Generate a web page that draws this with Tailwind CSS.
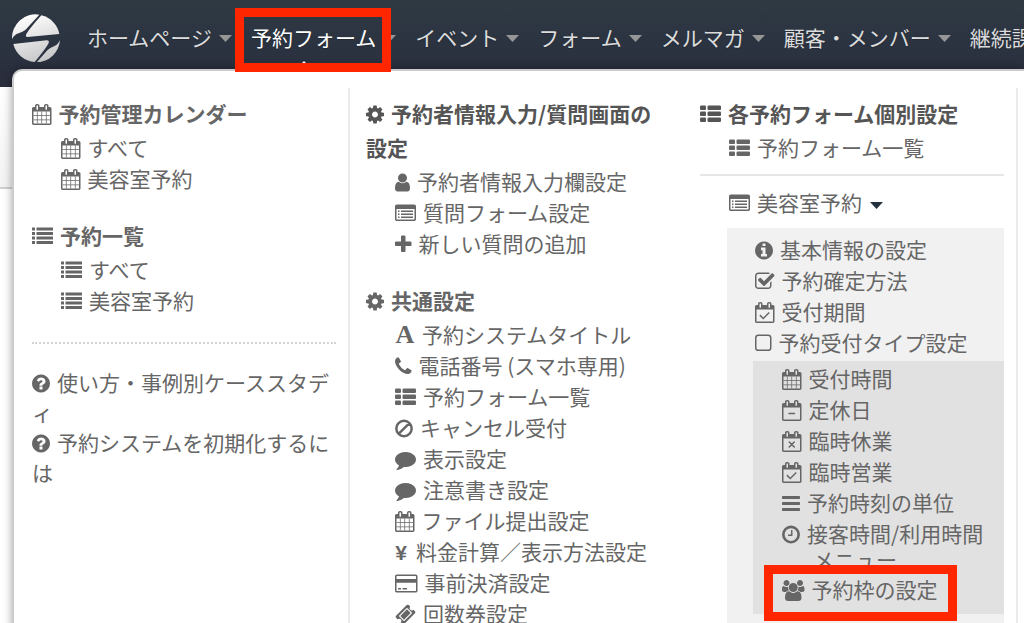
<!DOCTYPE html>
<html lang="ja">
<head>
  <meta charset="utf-8">
  <meta name="viewport" content="width=device-width, initial-scale=1">
  <title>予約フォーム</title>
  <script src="https://cdn.jsdelivr.net/npm/@tailwindcss/browser@4"></script>
</head>
<body class="h-screen overflow-hidden bg-white font-['Noto_Sans_CJK_JP',sans-serif] text-[21px] text-[#666]">

<!-- icon sprite -->
<svg class="hidden" aria-hidden="true">
  <defs>
    <path id="cal-frame" fill-rule="evenodd" d="M192 1664h1408v-1024h-1408zM576 448v-288q0-13-9.500-22.500t-22.500-9.500h-64q-13 0-22.500 9.500t-9.500 22.500v288q0 13 9.500 22.500t22.500 9.500h64q13 0 22.500-9.500t9.500-22.500zM1344 448v-288q0-13-9.500-22.500t-22.500-9.500h-64q-13 0-22.500 9.500t-9.500 22.500v288q0 13 9.500 22.500t22.500 9.500h64q13 0 22.500-9.500t9.500-22.500zM1728 384v1280q0 52-38 90t-90 38h-1408q-52 0-90-38t-38-90v-1280q0-52 38-90t90-38h128v-96q0-66 47-113t113-47h64q66 0 113 47t47 113v96h384v-96q0-66 47-113t113-47h64q66 0 113 47t47 113v96h128q52 0 90 38t38 90z"/>
    <g id="calendar">
      <use href="#cal-frame"/>
      <path d="M480 640h64v1024h-64zM864 640h64v1024h-64zM1248 640h64v1024h-64zM192 928h1408v64h-1408zM192 1312h1408v64h-1408z"/>
    </g>
    <g id="calendar-check">
      <use href="#cal-frame"/>
      <path d="M1303 964l-512 512q-10 9-23 9t-23-9l-288-288q-9-10-9-23t9-22l46-46q9-9 22-9t23 9l220 220 444-444q10-9 23-9t22 9l46 46q9 9 9 22t-9 23z"/>
    </g>
    <g id="calendar-minus">
      <use href="#cal-frame"/>
      <rect x="608" y="1088" width="576" height="128" rx="32"/>
    </g>
    <g id="calendar-times">
      <use href="#cal-frame"/>
      <path d="M680 936l432 432M1112 936l-432 432" fill="none" stroke="currentColor" stroke-width="128" stroke-linecap="round"/>
    </g>
    <path id="list" d="M0 128h256v256h-256zM0 512h256v256h-256zM0 896h256v256h-256zM0 1280h256v256h-256zM384 128h1408v256h-1408zM384 512h1408v256h-1408zM384 896h1408v256h-1408zM384 1280h1408v256h-1408z"/>
    <g id="th-list">
      <rect y="128" width="512" height="384" rx="96"/><rect x="640" y="128" width="1152" height="384" rx="96"/>
      <rect y="640" width="512" height="384" rx="96"/><rect x="640" y="640" width="1152" height="384" rx="96"/>
      <rect y="1152" width="512" height="384" rx="96"/><rect x="640" y="1152" width="1152" height="384" rx="96"/>
    </g>
    <g id="list-alt">
      <path fill-rule="evenodd" d="M160 128h1472q66 0 113 47t47 113v1088q0 66-47 113t-113 47h-1472q-66 0-113-47t-47-113v-1088q0-66 47-113t113-47zM128 512v864q0 32 32 32h1472q32 0 32-32v-864z"/>
      <path d="M256 640h128v128h-128zM256 896h128v128h-128zM256 1152h128v128h-128zM512 640h1024v128h-1024zM512 896h1024v128h-1024zM512 1152h1024v128h-1024z"/>
    </g>
    <path id="cog" fill-rule="evenodd" d="M1152 896q0-106-75-181t-181-75-181 75-75 181 75 181 181 75 181-75 75-181zm512-109v222q0 12-8 23t-20 13l-185 28q-19 54-39 91 35 50 107 138 10 12 10 25t-9 23q-27 37-99 108t-94 71q-12 0-26-9l-138-108q-44 23-91 38-16 136-29 186-7 28-36 28h-222q-14 0-24.500-8.500t-11.500-21.500l-28-184q-49-16-90-37l-141 107q-10 9-25 9-14 0-25-11-126-114-165-168-7-10-7-23 0-12 8-23 15-21 51-66.500t54-70.500q-27-50-41-99l-183-27q-13-2-21-12.500t-8-23.500v-222q0-12 8-23t19-13l186-28q14-46 39-92-40-57-107-138-10-12-10-24 0-10 9-23 26-36 98.500-107.500t94.500-71.500q13 0 26 10l138 107q44-23 91-38 16-136 29-186 7-28 36-28h222q14 0 24.500 8.500t11.500 21.500l28 184q49 16 90 37l142-107q9-9 24-9 13 0 25 10 129 119 165 170 7 8 7 22 0 12-8 23-15 21-51 66.500t-54 70.500q26 50 41 98l183 28q13 2 21 12.500t8 23.500z"/>
    <path id="user" d="M1536 1399q0 109-62.500 187t-150.500 78h-854q-88 0-150.500-78t-62.500-187q0-85 8.500-160.500t31.500-152 58.500-131 94-89 134.500-34.500q131 128 313 128t313-128q76 0 134.500 34.500t94 89 58.500 131 31.500 152 8.500 160.500zm-256-887q0 159-112.500 271.500t-271.500 112.500-271.500-112.500-112.500-271.500 112.500-271.500 271.500-112.500 271.500 112.500 112.500 271.500z"/>
    <path id="plus" d="M1600 736v192q0 40-28 68t-68 28h-416v416q0 40-28 68t-68 28h-192q-40 0-68-28t-28-68v-416h-416q-40 0-68-28t-28-68v-192q0-40 28-68t68-28h416v-416q0-40 28-68t68-28h192q40 0 68 28t28 68v416h416q40 0 68 28t28 68z"/>
    <path id="question" fill-rule="evenodd" d="M1024 1376v-192q0-14-9-23t-23-9h-192q-14 0-23 9t-9 23v192q0 14 9 23t23 9h192q14 0 23-9t9-23zm256-672q0-88-55.500-163t-138.500-116-170-41q-243 0-371 213-15 24 8 42l132 100q7 6 19 6 16 0 25-12 53-68 86-92 34-24 86-24 48 0 85.500 26t37.500 59q0 38-20 61t-68 45q-63 28-115.500 86.500t-52.500 125.500v36q0 14 9 23t23 9h192q14 0 23-9t9-23q0-19 21.500-49.500t54.500-49.500q32-18 49-28.500t46-35 44.500-48 28-60.500 12.500-81zm384 192q0 209-103 385.500t-279.500 279.500-385.500 103-385.500-103-279.500-279.500-103-385.500 103-385.500 279.500-279.500 385.500-103 385.500 103 279.500 279.500 103 385.500z"/>
    <path id="info" fill-rule="evenodd" d="M1152 1376v-160q0-14-9-23t-23-9h-96v-512q0-14-9-23t-23-9h-320q-14 0-23 9t-9 23v160q0 14 9 23t23 9h96v320h-96q-14 0-23 9t-9 23v160q0 14 9 23t23 9h448q14 0 23-9t9-23zm-128-896v-160q0-14-9-23t-23-9h-192q-14 0-23 9t-9 23v160q0 14 9 23t23 9h192q14 0 23-9t9-23zm640 416q0 209-103 385.500t-279.500 279.500-385.500 103-385.500-103-279.500-279.500-103-385.500 103-385.500 279.500-279.500 385.500-103 385.500 103 279.500 279.500 103 385.500z"/>
    <path id="check-square" d="M1472 930v318q0 119-84.500 203.500t-203.500 84.500h-832q-119 0-203.500-84.500t-84.500-203.500v-832q0-119 84.500-203.500t203.500-84.500h832q63 0 117 25 15 7 18 23 3 17-9 29l-49 49q-10 10-23 10-3 0-9-2-23-6-45-6h-832q-66 0-113 47t-47 113v832q0 66 47 113t113 47h832q66 0 113-47t47-113v-254q0-13 9-22l64-64q10-10 23-10 6 0 12 3 20 8 20 29zm231-489l-814 814q-24 24-57 24t-57-24l-430-430q-24-24-24-57t24-57l110-110q24-24 57-24t57 24l263 263 647-647q24-24 57-24t57 24l110 110q24 24 24 57t-24 57z"/>
    <rect id="square" x="64" y="192" width="1280" height="1280" rx="224" fill="none" stroke="currentColor" stroke-width="128"/>
    <g id="clock">
      <circle cx="896" cy="896" r="656" fill="none" stroke="currentColor" stroke-width="224"/>
      <path d="M1024 544v448q0 14-9 23t-23 9h-320q-14 0-23-9t-9-23v-64q0-14 9-23t23-9h224v-352q0-14 9-23t23-9h64q14 0 23 9t9 23z"/>
    </g>
    <path id="ban" d="M896 240a656 656 0 1 0 0 1312a656 656 0 1 0 0-1312zM432 1360L1360 432" fill="none" stroke="currentColor" stroke-width="210"/>
    <path id="comment" d="M1792 896q0 174-120 321.500t-326 233-450 85.500q-70 0-145-8-198 175-460 242-49 14-114 22-17 2-30.500-9t-17.500-29v-1q-3-4-.5-12t2-10 4.500-9.500l6-9 7-8.500 8-9q7-8 31-34.500t34.500-38 31-39.500 32.500-51 27-59 26-76q-157-89-247.500-220t-90.500-281q0-174 120-321.500t326-233 450-85.500 450 85.500 326 233 120 321.500z"/>
    <path id="phone" d="M1600 1240q0 27-10 70.500t-21 68.500q-21 50-122 106-94 51-186 51-27 0-52.500-3.500t-57.500-12.500-47.500-14.500-55.500-20.500-49-18q-98-35-175-83-128-79-264.500-215.500t-215.500-264.500q-48-77-83-175-3-9-18-49t-20.500-55.500-14.500-47.500-12.500-57.500-3.500-52.500q0-92 51-186 56-101 106-122 25-11 68.500-21t70.500-10q14 0 21 3 18 6 53 76 11 19 30 54t35 63.500 31 53.500q3 4 17.500 25t21.500 35.500 7 28.500q0 20-28.500 50t-62 55-62 53-28.500 46q0 9 5 22.500t8.500 20.500 14 24 11.500 19q76 137 174 235t235 174q2 1 19 11.500t24 14 20.500 8.500 22.500 5q18 0 46-28.500t53-62 55-62 50-28.500q14 0 28.500 7t35.500 21.500 25 17.500q25 15 53.500 31t63.500 35 54 30q70 35 76 53 3 7 3 21z"/>
    <path id="bars" d="M192 256h1408q64 0 64 64v128q0 64-64 64h-1408q-64 0-64-64v-128q0-64 64-64zM192 768h1408q64 0 64 64v128q0 64-64 64h-1408q-64 0-64-64v-128q0-64 64-64zM192 1280h1408q64 0 64 64v128q0 64-64 64h-1408q-64 0-64-64v-128q0-64 64-64z"/>
    <path id="card" fill-rule="evenodd" d="M160 128h1600q66 0 113 47t47 113v1216q0 66-47 113t-113 47h-1600q-66 0-113-47t-47-113v-1216q0-66 47-113t113-47zM160 256q-32 0-32 32v224h1664v-224q0-32-32-32zM128 832v672q0 32 32 32h1600q32 0 32-32v-672zM256 1280h256v128h-256zM640 1280h384v128h-384z"/>
    <path id="ticket" fill-rule="evenodd" d="M1024 452l316 316-572 572-316-316zm-211 979l618-618q19-19 19-45t-19-45l-362-362q-18-18-45-18t-45 18l-618 618q-19 19-19 45t19 45l362 362q18 18 45 18t45-18zm889-637l-907 908q-37 37-90.500 37t-90.500-37l-126-126q56-56 56-136t-56-136-136-56-136 56l-125-126q-37-37-37-90.500t37-90.500l907-906q37-37 90.500-37t90.500 37l125 125q-56 56-56 136t56 136 136 56 136-56l126 125q37 37 37 90.500t-37 90.500z"/>
    <path id="group" d="M657 896q-162 5-265 128h-134q-82 0-138-40.500t-56-118.500q0-353 124-353 6 0 43.500 21t97.500 42.500 119 21.500q67 0 133-23-5 37-5 66 0 139 81 256zm1071 637q0 120-73 189.500t-194 69.500h-874q-121 0-194-69.500t-73-189.500q0-53 3.500-103.500t14-109 26.500-108.500 43-97.500 62-81 85.500-53.500 111.500-20q10 0 43 21.500t73 48 107 48 135 21.500 135-21.500 107-48 73-48 43-21.500q61 0 111.500 20t85.500 53.500 62 81 43 97.500 26.500 108.500 14 109 3.500 103.500zm-1024-1277q0 106-75 181t-181 75-181-75-75-181 75-181 181-75 181 75 75 181zm704 384q0 159-112.500 271.500t-271.500 112.500-271.500-112.500-112.500-271.500 112.500-271.500 271.500-112.500 271.500 112.500 112.500 271.500zm576 225q0 78-56 118.500t-138 40.500h-134q-103-123-265-128 81-117 81-256 0-29-5-66 66 23 133 23 59 0 119-21.500t97.500-42.500 43.500-21q124 0 124 353zm-128-609q0 106-75 181t-181 75-181-75-75-181 75-181 181-75 181 75 75 181z"/>
  </defs>
</svg>

<header class="relative h-[87px] bg-linear-to-b from-[#2f3a43] via-[#2b3341] to-[#2a2d3c]">
  <div class="flex h-[76px] items-center overflow-hidden pl-3">
    <a href="#" aria-label="トップ" class="mr-[27px] shrink-0">
      <svg class="size-12" viewBox="34 42 144 144" aria-hidden="true">
        <defs>
          <linearGradient id="silver" gradientUnits="userSpaceOnUse" x1="80" y1="44" x2="130" y2="188">
            <stop offset="0" stop-color="#fff"/><stop offset="1" stop-color="#c4c4c6"/>
          </linearGradient>
        </defs>
        <g fill="url(#silver)">
          <path d="M34 118A71 71 0 0 1 116 44L74 90Q66 96 54 100Q40 104 34 118z"/>
          <path d="M122 46A71 71 0 0 1 176 102L80 111Q73 110 77 102Q84 89 122 46z"/>
          <path d="M38 132L138 121Q148 121 143 131Q134 147 102 186A71 71 0 0 1 38 132z"/>
          <path d="M178 120A71 71 0 0 1 108 187L140 151Q148 143 160 139Q172 134 178 120z"/>
        </g>
      </svg>
    </a>
    <nav class="flex gap-[19px] whitespace-nowrap text-[#dcdcdc] text-shadow-xs">
      <a href="#" class="flex items-center gap-[7px]">ホームページ<svg class="h-[7px] w-[13px] fill-[#969696]" viewBox="0 0 13 7"><path d="M0 0h13L6.500 7z"/></svg></a>
      <a href="#" class="relative flex items-center gap-[7px] text-white" aria-current="page">予約フォーム<svg class="h-[7px] w-[13px] fill-[#969696]" viewBox="0 0 13 7"><path d="M0 0h13L6.500 7z"/></svg></a>
      <a href="#" class="flex items-center gap-[7px]">イベント<svg class="h-[7px] w-[13px] fill-[#969696]" viewBox="0 0 13 7"><path d="M0 0h13L6.500 7z"/></svg></a>
      <a href="#" class="flex items-center gap-[7px]">フォーム<svg class="h-[7px] w-[13px] fill-[#969696]" viewBox="0 0 13 7"><path d="M0 0h13L6.500 7z"/></svg></a>
      <a href="#" class="flex items-center gap-[7px]">メルマガ<svg class="h-[7px] w-[13px] fill-[#969696]" viewBox="0 0 13 7"><path d="M0 0h13L6.500 7z"/></svg></a>
      <a href="#" class="flex items-center gap-[7px]">顧客・メンバー<svg class="h-[7px] w-[13px] fill-[#969696]" viewBox="0 0 13 7"><path d="M0 0h13L6.500 7z"/></svg></a>
      <a href="#" class="flex items-center gap-[7px]">継続課金</a>
    </nav>
  </div>

  <!-- dropdown pointer and highlight frame -->
  <svg class="absolute top-[61px] left-[296px] h-2 w-4 fill-white" viewBox="0 0 16 8" aria-hidden="true"><path d="M0 8L8 0L16 8z"/></svg>
  <div class="absolute top-2 left-[235px] z-20 h-[64px] w-[156px] border-[9px] border-[#ff2600]"></div>

  <!-- mega menu -->
  <div class="absolute top-[69px] right-0 left-3 z-10 flex rounded-tl-[10px] border-t-2 border-l-2 border-[#cbcbcd] bg-white pt-[17px] pr-[6px] pl-[2px] leading-[31px] shadow-[0_0_10px_rgba(0,0,0,0.35)]">

    <section class="min-w-0 flex-1 border-r-2 border-[#ebebeb] pt-2 pr-3 pl-4">
      <h2 class="mb-[2px] leading-[34px] font-bold"><a href="#"><svg class="mr-[7px] inline-block h-[21px] w-auto fill-current align-[-3px]" viewBox="64 0 1664 1792"><use href="#calendar"/></svg>予約管理カレンダー</a></h2>
      <ul class="mb-6 pl-[29px]">
        <li><a href="#"><svg class="mr-[7px] inline-block h-[21px] w-auto fill-current align-[-3px]" viewBox="64 0 1664 1792"><use href="#calendar"/></svg>すべて</a></li>
        <li><a href="#"><svg class="mr-[7px] inline-block h-[21px] w-auto fill-current align-[-3px]" viewBox="64 0 1664 1792"><use href="#calendar"/></svg>美容室予約</a></li>
      </ul>
      <h2 class="mb-[2px] leading-[34px] font-bold"><a href="#"><svg class="mr-[7px] inline-block h-[21px] w-auto fill-current align-[-3px]" viewBox="0 0 1792 1792"><use href="#list"/></svg>予約一覧</a></h2>
      <ul class="mb-[26px] pl-[29px]">
        <li><a href="#"><svg class="mr-[7px] inline-block h-[21px] w-auto fill-current align-[-3px]" viewBox="0 0 1792 1792"><use href="#list"/></svg>すべて</a></li>
        <li><a href="#"><svg class="mr-[7px] inline-block h-[21px] w-auto fill-current align-[-3px]" viewBox="0 0 1792 1792"><use href="#list"/></svg>美容室予約</a></li>
      </ul>
      <ul class="border-t-2 border-dotted border-[#d4d4d4] pt-[23px] leading-[30px] [line-break:loose]">
        <li><a href="#"><svg class="mr-[7px] inline-block h-[21px] w-auto fill-current align-[-3px]" viewBox="128 0 1536 1792"><use href="#question"/></svg>使い方・事例別ケーススタディ</a></li>
        <li><a href="#"><svg class="mr-[7px] inline-block h-[21px] w-auto fill-current align-[-3px]" viewBox="128 0 1536 1792"><use href="#question"/></svg>予約システムを初期化するには</a></li>
      </ul>
    </section>

    <section class="min-w-0 flex-1 pt-2 pr-[14px] pl-4">
      <h2 class="mb-[2px] leading-[34px] font-bold text-[#555]"><svg class="mr-[7px] inline-block h-[21px] w-auto fill-current align-[-3px]" viewBox="128 0 1536 1792"><use href="#cog"/></svg>予約者情報入力/質問画面の設定</h2>
      <ul class="mb-6 pl-[29px]">
        <li><a href="#"><svg class="mr-[7px] inline-block h-[21px] w-auto fill-current align-[-3px]" viewBox="256 0 1280 1792"><use href="#user"/></svg>予約者情報入力欄設定</a></li>
        <li><a href="#"><svg class="mr-[7px] inline-block h-[21px] w-auto fill-current align-[-3px]" viewBox="0 0 1792 1792"><use href="#list-alt"/></svg>質問フォーム設定</a></li>
        <li><a href="#"><svg class="mr-[7px] inline-block h-[21px] w-auto fill-current align-[-3px]" viewBox="192 0 1408 1792"><use href="#plus"/></svg>新しい質問の追加</a></li>
      </ul>
      <h2 class="mb-[2px] leading-[34px] font-bold"><svg class="mr-[7px] inline-block h-[21px] w-auto fill-current align-[-3px]" viewBox="128 0 1536 1792"><use href="#cog"/></svg>共通設定</h2>
      <ul class="pl-[29px] whitespace-nowrap">
        <li class="h-[31px]"><a href="#"><span class="mr-[7px] inline-block w-5 text-center font-['Liberation_Serif',serif] text-[26px] leading-none font-bold">A</span>予約システムタイトル</a></li>
        <li><a href="#"><svg class="mr-[7px] inline-block h-[21px] w-auto fill-current align-[-3px]" viewBox="192 0 1408 1792"><use href="#phone"/></svg>電話番号 (スマホ専用)</a></li>
        <li><a href="#"><svg class="mr-[7px] inline-block h-[21px] w-auto fill-current align-[-3px]" viewBox="0 0 1792 1792"><use href="#th-list"/></svg>予約フォーム一覧</a></li>
        <li><a href="#"><svg class="mr-[7px] inline-block h-[21px] w-auto fill-current align-[-3px]" viewBox="128 0 1536 1792"><use href="#ban"/></svg>キャンセル受付</a></li>
        <li><a href="#"><svg class="mr-[7px] inline-block h-[21px] w-auto fill-current align-[-3px]" viewBox="0 0 1792 1792"><use href="#comment"/></svg>表示設定</a></li>
        <li><a href="#"><svg class="mr-[7px] inline-block h-[21px] w-auto fill-current align-[-3px]" viewBox="0 0 1792 1792"><use href="#comment"/></svg>注意書き設定</a></li>
        <li><a href="#"><svg class="mr-[7px] inline-block h-[21px] w-auto fill-current align-[-3px]" viewBox="64 0 1664 1792"><use href="#calendar"/></svg>ファイル提出設定</a></li>
        <li><a href="#"><span class="mr-[9px] inline-block w-3 text-center font-['Liberation_Sans',sans-serif] leading-none font-bold">¥</span>料金計算／表示方法設定</a></li>
        <li><a href="#"><svg class="mr-[7px] inline-block h-[21px] w-auto fill-current align-[-3px]" viewBox="0 0 1920 1792"><use href="#card"/></svg>事前決済設定</a></li>
        <li><a href="#"><svg class="mr-[7px] inline-block h-[21px] w-auto fill-current align-[-3px]" viewBox="0 0 1792 1792"><use href="#ticket"/></svg>回数券設定</a></li>
      </ul>
    </section>

    <section class="min-w-0 flex-1 border-r-2 border-[#ebebeb] pt-2 pr-3 pl-4">
      <h2 class="mb-[2px] leading-[34px] font-bold text-[#555]"><svg class="mr-[7px] inline-block h-[21px] w-auto fill-current align-[-3px]" viewBox="0 0 1792 1792"><use href="#th-list"/></svg>各予約フォーム個別設定</h2>
      <div class="pl-[29px]"><a href="#"><svg class="mr-[7px] inline-block h-[21px] w-auto fill-current align-[-3px]" viewBox="0 0 1792 1792"><use href="#th-list"/></svg>予約フォーム一覧</a></div>
      <hr class="mt-[11px] mb-[11px] border-t-2 border-[#e6e6e6]">
      <button type="button" aria-expanded="true" class="ml-[29px] block"><svg class="mr-[7px] inline-block h-[21px] w-auto fill-current align-[-3px]" viewBox="0 0 1792 1792"><use href="#list-alt"/></svg>美容室予約<svg class="ml-2 inline-block h-[7px] w-[13px] fill-[#25303d]" viewBox="0 0 13 7"><path d="M0 0h13L6.500 7z"/></svg></button>
      <div class="mt-[10px] ml-[27px] bg-[#f1f1f1] pt-[6px] pb-9 whitespace-nowrap">
        <ul class="pl-7">
          <li><a href="#"><svg class="mr-[7px] inline-block h-[21px] w-auto fill-current align-[-3px]" viewBox="128 0 1536 1792"><use href="#info"/></svg>基本情報の設定</a></li>
          <li><a href="#"><svg class="mr-[7px] inline-block h-[21px] w-auto fill-current align-[-3px]" viewBox="64 0 1664 1792"><use href="#check-square"/></svg>予約確定方法</a></li>
          <li><a href="#"><svg class="mr-[7px] inline-block h-[21px] w-auto fill-current align-[-3px]" viewBox="64 0 1664 1792"><use href="#calendar-check"/></svg>受付期間</a></li>
          <li><a href="#"><svg class="mr-[7px] inline-block h-[21px] w-auto fill-current align-[-3px]" viewBox="0 0 1408 1792"><use href="#square"/></svg>予約受付タイプ設定</a></li>
        </ul>
        <ul class="mt-[3px] ml-[26px] bg-[#e1e1e1] pt-[2px] pb-[9px] pl-[29px]">
          <li><a href="#"><svg class="mr-[7px] inline-block h-[21px] w-auto fill-current align-[-3px]" viewBox="64 0 1664 1792"><use href="#calendar"/></svg>受付時間</a></li>
          <li><a href="#"><svg class="mr-[7px] inline-block h-[21px] w-auto fill-current align-[-3px]" viewBox="64 0 1664 1792"><use href="#calendar-minus"/></svg>定休日</a></li>
          <li><a href="#"><svg class="mr-[7px] inline-block h-[21px] w-auto fill-current align-[-3px]" viewBox="64 0 1664 1792"><use href="#calendar-times"/></svg>臨時休業</a></li>
          <li><a href="#"><svg class="mr-[7px] inline-block h-[21px] w-auto fill-current align-[-3px]" viewBox="64 0 1664 1792"><use href="#calendar-check"/></svg>臨時営業</a></li>
          <li><a href="#"><svg class="mr-[7px] inline-block h-[21px] w-auto fill-current align-[-3px]" viewBox="128 0 1536 1792"><use href="#bars"/></svg>予約時刻の単位</a></li>
          <li><a href="#"><svg class="mr-[7px] inline-block h-[21px] w-auto fill-current align-[-3px]" viewBox="128 0 1536 1792"><use href="#clock"/></svg>接客時間/利用時間<span class="block h-[25px] pl-[31px] leading-5">メニュー</span></a></li>
          <li class="relative">
            <a href="#"><svg class="mr-[7px] inline-block h-[21px] w-auto fill-current align-[-3px]" viewBox="64 0 1920 1792"><use href="#group"/></svg>予約枠の設定</a>
            <div class="absolute -top-[9px] -left-[18px] h-[56px] w-[193px] border-[9px] border-[#ff2600]"></div>
          </li>
        </ul>
      </div>
    </section>
  </div>
</header>

<main class="h-[102px] border-b-2 border-[#cfcfcf] bg-linear-to-b from-white to-[#f3f3f3]"></main>

</body>
</html>
